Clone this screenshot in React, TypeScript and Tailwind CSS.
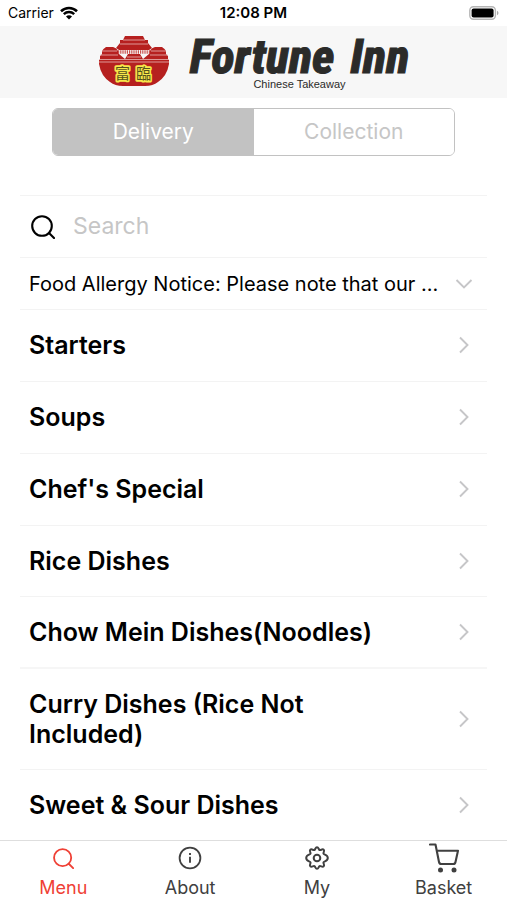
import { useState } from "react";

const categories = [
  "Starters",
  "Soups",
  "Chef's Special",
  "Rice Dishes",
  "Chow Mein Dishes(Noodles)",
  "Curry Dishes (Rice Not Included)",
  "Sweet & Sour Dishes",
];

function WifiIcon() {
  return (
    <svg className="h-[14px] w-[18px]" viewBox="0 0 18 14" fill="none" aria-hidden="true">
      <path d="M1 5.2C5.6 .9 12.4.9 17 5.2" stroke="#000" strokeWidth="2.6" />
      <path d="M3.8 8.1c3-2.8 7.4-2.8 10.4 0" stroke="#000" strokeWidth="2.4" />
      <path d="M9 13.4 6 10.4c1.7-1.5 4.3-1.5 6 0z" fill="#000" />
    </svg>
  );
}

function BatteryIcon() {
  return (
    <svg className="h-[14px] w-[30px]" viewBox="0 0 30 14" fill="none" aria-hidden="true">
      <rect x=".8" y=".8" width="25.6" height="12.4" rx="3.6" stroke="#b5b5b5" strokeWidth="1.4" />
      <rect x="2.6" y="2.4" width="22" height="9.2" rx="2" fill="#000" />
      <path d="M28 4.8c2 .8 2 3.6 0 4.4z" fill="#a8a8a8" />
    </svg>
  );
}

function Emblem() {
  return (
    <svg className="h-[50px] w-[72px]" viewBox="0 0 72 50" aria-hidden="true">
      <g fill="#b6201f">
        <path d="M27 0h18l2 4h3v3l4 5-3 2H21l-3-2 4-5V4h3z" />
        <path d="M4 15q1-2 4-4h7q4 1 5 4l1 3 6 5 3-5h12l3 5 6-5 1-3q1-3 5-4h7q3 2 4 4v3l2 2v3l1 1v4q-2 12-11 18-5 4-13 4H25q-8 0-13-4Q3 40 1 28v-4l1-1v-3l2-2z" />
      </g>
      <path d="M25 4h22M22 8h28M4 15h15M53 15h15M2 19h18M52 19h18M29 21h14M1 23.500h70M1 26h70" stroke="#f0cfcb" strokeWidth=".7" />
      <path d="M20 16h32" stroke="#c9524f" strokeWidth="3.400" strokeDasharray="1.200 1" />
      <g
        fill="#55521d"
        stroke="#f7e64a"
        strokeWidth="3.4"
        strokeLinejoin="round"
        paintOrder="stroke"
        className="font-['Noto_Sans_CJK_TC',sans-serif] text-[15px] font-normal"
      >
        <text x="17" y="43">富</text>
        <text x="38" y="43">臨</text>
      </g>
    </svg>
  );
}

function SearchIcon({ className }: { className: string }) {
  return (
    <svg className={className} viewBox="0 0 24 24" fill="none" stroke="currentColor" strokeWidth="2.1" aria-hidden="true">
      <circle cx="11" cy="11" r="9.8" />
      <path d="m18 18 5 5" strokeLinecap="round" />
    </svg>
  );
}

function InfoIcon() {
  return (
    <svg className="size-6" viewBox="0 0 24 24" fill="none" stroke="currentColor" strokeWidth="1.8" aria-hidden="true">
      <circle cx="12" cy="12" r="10.4" />
      <path d="M12 10.8v6M12 7v2" strokeWidth="1.9" />
    </svg>
  );
}

function GearIcon() {
  return (
    <svg className="size-6" viewBox="0 0 24 24" fill="none" stroke="currentColor" strokeWidth="2" strokeLinejoin="round" aria-hidden="true">
      <circle cx="12" cy="12" r="3.3" />
      <path d="M12 1.2c1.700 0 1.500 2.300 2.600 2.800 1.200.5 2.800-1.500 4.100-.3 1.300 1.400-.7 2.800-.2 4 .5 1.200 4.300 1 4.300 4.300s-3.800 3.100-4.300 4.300c-.5 1.200 1.500 2.700.2 4-1.300 1.300-2.900-.7-4.100-.2-1.100.5-.9 2.700-2.600 2.700s-1.500-2.200-2.600-2.700c-1.200-.5-2.800 1.500-4.100.2-1.300-1.300.7-2.800.2-4C5 15.100 1.200 15.300 1.200 12S5 8.900 5.500 7.700c.5-1.200-1.500-2.600-.2-4 1.300-1.200 2.900.8 4.100.3C10.500 3.500 10.300 1.200 12 1.200z" />
    </svg>
  );
}

function CartIcon() {
  return (
    <svg className="h-[30px] w-[30px]" viewBox="0 0 30 30" fill="none" stroke="currentColor" strokeWidth="2.1" strokeLinejoin="round" aria-hidden="true">
      <path d="M1 1.500h5.500L10 19q.4 2 2.300 2h12q1.800 0 2.200-2L29 7.700H8" strokeLinecap="round" />
      <circle cx="11.500" cy="27" r="2.500" fill="currentColor" stroke="none" />
      <circle cx="25" cy="27" r="2.500" fill="currentColor" stroke="none" />
    </svg>
  );
}

function Chevron({ className = "" }: { className?: string }) {
  return (
    <svg className={`size-[18px] shrink-0 ${className}`} viewBox="0 0 18 18" fill="none" stroke="#c6c6c8" strokeWidth="1.9" aria-hidden="true">
      <path d="m5 1.500 7.500 7.500L5 16.500" />
    </svg>
  );
}

const tabs = [
  { label: "Menu", icon: <SearchIcon className="size-[21px]" /> },
  { label: "About", icon: <InfoIcon /> },
  { label: "My", icon: <GearIcon /> },
  { label: "Basket", icon: <CartIcon /> },
];

export default function App() {
  const [mode, setMode] = useState("Delivery");
  const [tab, setTab] = useState("Menu");

  return (
    <div className="flex h-screen flex-col bg-white font-[Inter,'Liberation_Sans',sans-serif] text-black">
      <div className="grid h-[26px] shrink-0 grid-cols-3 items-center px-2 text-sm">
        <div className="flex items-center gap-1.5">
          Carrier <WifiIcon />
        </div>
        <div className="text-center text-[15px] font-semibold">12:08 PM</div>
        <div className="flex justify-end">
          <BatteryIcon />
        </div>
      </div>

      <header className="flex h-[72px] shrink-0 items-start justify-center gap-5 bg-[#f7f7f7] pt-2.5">
        <Emblem />
        <div className="flex flex-col items-center text-[#2b2b29]">
          <h1 className="flex gap-4 font-['Roboto_Condensed',Lato,sans-serif] text-[48px] leading-[42px] font-extrabold whitespace-nowrap italic [-webkit-text-stroke:1px_#2b2b29]">
            <span>Fortune</span> <span>Inn</span>
          </h1>
          <p className="font-['Liberation_Sans',sans-serif] text-[11px] leading-3">Chinese Takeaway</p>
        </div>
      </header>

      <main className="min-h-0 flex-1 overflow-y-auto px-5 [scrollbar-width:none]">
        <div className="mx-8 mt-2.5 flex h-12 overflow-hidden rounded-md border border-[#c2c2c2]">
          {["Delivery", "Collection"].map((option) => (
            <button
              key={option}
              type="button"
              aria-pressed={mode === option}
              onClick={() => setMode(option)}
              className={`flex-1 text-[21px] ${mode === option ? "bg-[#c2c2c2] text-white" : "bg-white text-[#c6c6c6]"}`}
            >
              {option}
            </button>
          ))}
        </div>

        <label className="mt-[39px] flex h-[63px] items-center gap-[18px] border-y border-[#f3f3f3] pl-[11px]">
          <SearchIcon className="size-6" />
          <input
            type="search"
            aria-label="Search"
            placeholder="Search"
            className="min-w-0 flex-1 text-[23px] outline-none placeholder:text-[#c6c6c6]"
          />
        </label>

        <button type="button" className="flex h-[52px] w-full items-center justify-between border-b border-[#f3f3f3] pr-3.5 pl-[9px] text-left text-xl">
          <span>Food Allergy Notice: Please note that our ...</span>
          <Chevron className="rotate-90" />
        </button>

        <ul>
          {categories.map((name, i) => (
            <li key={name} className={i === 4 ? "border-b-2 border-[#f6f6f6]" : "border-b border-[#f3f3f3]"}>
              <button type="button" className={`flex w-full items-center justify-between pr-3.5 pl-[9px] text-left ${i < 3 ? "pt-5 pb-[21px]" : "py-5"}`}>
                <span className="max-w-[350px] text-[25px] leading-[30px] font-semibold">{name}</span>
                <Chevron />
              </button>
            </li>
          ))}
        </ul>
      </main>

      <nav className="grid h-[60px] shrink-0 grid-cols-4 border-t border-[#dedede] bg-white">
        {tabs.map(({ label, icon }) => (
          <button
            key={label}
            type="button"
            aria-current={tab === label ? "page" : undefined}
            onClick={() => setTab(label)}
            className={`flex flex-col items-center text-lg ${tab === label ? "text-[#ef4035]" : "text-[#404040]"}`}
          >
            <span className="flex h-[34px] items-center">{icon}</span>
            <span className="leading-[26px]">{label}</span>
          </button>
        ))}
      </nav>
    </div>
  );
}
